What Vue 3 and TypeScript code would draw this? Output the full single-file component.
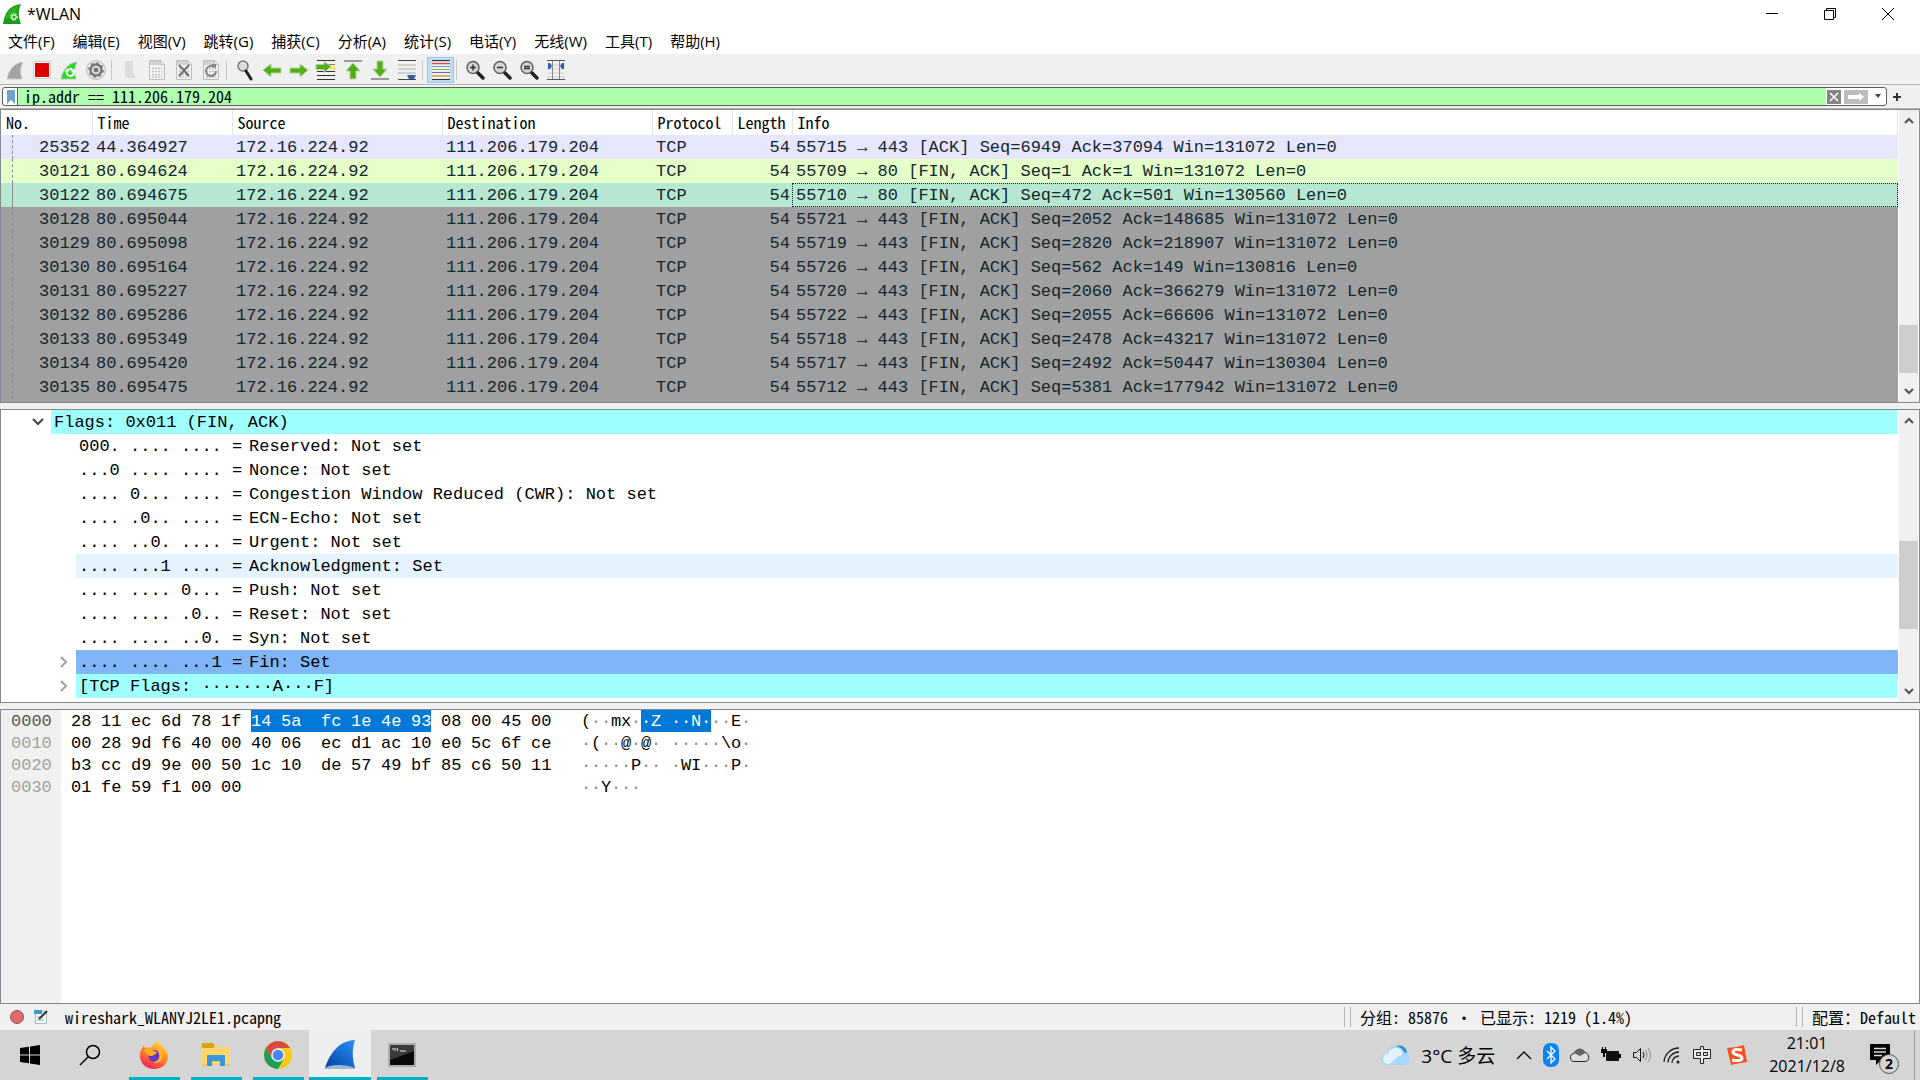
<script setup lang="ts">
interface Packet { no: number; time: string; info: string; kind: string }
interface Detail { bits?: string; text: string; arrow?: string; cls?: string }

const menus = ['文件(F)', '编辑(E)', '视图(V)', '跳转(G)', '捕获(C)', '分析(A)', '统计(S)', '电话(Y)', '无线(W)', '工具(T)', '帮助(H)']

const tools: string[] = [
  'start', 'stop', 'restart', 'options', '|', 'open', 'save', 'close', 'reload', '|',
  'find', 'back', 'forward', 'goto', 'first', 'last', 'autoscroll', '|', 'colorize', '|',
  'zoom-in', 'zoom-out', 'zoom-reset', 'resize',
]

const columns = ['No.', 'Time', 'Source', 'Destination', 'Protocol', 'Length', 'Info']

const packets: Packet[] = [
  { no: 25352, time: '44.364927', info: '55715 → 443 [ACK] Seq=6949 Ack=37094 Win=131072 Len=0', kind: 'tcp' },
  { no: 30121, time: '80.694624', info: '55709 → 80 [FIN, ACK] Seq=1 Ack=1 Win=131072 Len=0', kind: 'http' },
  { no: 30122, time: '80.694675', info: '55710 → 80 [FIN, ACK] Seq=472 Ack=501 Win=130560 Len=0', kind: 'selected' },
  { no: 30128, time: '80.695044', info: '55721 → 443 [FIN, ACK] Seq=2052 Ack=148685 Win=131072 Len=0', kind: 'fin' },
  { no: 30129, time: '80.695098', info: '55719 → 443 [FIN, ACK] Seq=2820 Ack=218907 Win=131072 Len=0', kind: 'fin' },
  { no: 30130, time: '80.695164', info: '55726 → 443 [FIN, ACK] Seq=562 Ack=149 Win=130816 Len=0', kind: 'fin' },
  { no: 30131, time: '80.695227', info: '55720 → 443 [FIN, ACK] Seq=2060 Ack=366279 Win=131072 Len=0', kind: 'fin' },
  { no: 30132, time: '80.695286', info: '55722 → 443 [FIN, ACK] Seq=2055 Ack=66606 Win=131072 Len=0', kind: 'fin' },
  { no: 30133, time: '80.695349', info: '55718 → 443 [FIN, ACK] Seq=2478 Ack=43217 Win=131072 Len=0', kind: 'fin' },
  { no: 30134, time: '80.695420', info: '55717 → 443 [FIN, ACK] Seq=2492 Ack=50447 Win=130304 Len=0', kind: 'fin' },
  { no: 30135, time: '80.695475', info: '55712 → 443 [FIN, ACK] Seq=5381 Ack=177942 Win=131072 Len=0', kind: 'fin' },
]

const details: Detail[] = [
  { text: 'Flags: 0x011 (FIN, ACK)', arrow: 'open', cls: 'parent cyan' },
  { bits: '000. .... .... = ', text: 'Reserved: Not set' },
  { bits: '...0 .... .... = ', text: 'Nonce: Not set' },
  { bits: '.... 0... .... = ', text: 'Congestion Window Reduced (CWR): Not set' },
  { bits: '.... .0.. .... = ', text: 'ECN-Echo: Not set' },
  { bits: '.... ..0. .... = ', text: 'Urgent: Not set' },
  { bits: '.... ...1 .... = ', text: 'Acknowledgment: Set', cls: 'hover' },
  { bits: '.... .... 0... = ', text: 'Push: Not set' },
  { bits: '.... .... .0.. = ', text: 'Reset: Not set' },
  { bits: '.... .... ..0. = ', text: 'Syn: Not set' },
  { bits: '.... .... ...1 = ', text: 'Fin: Set', arrow: 'closed', cls: 'picked' },
  { text: '[TCP Flags: ·······A···F]', arrow: 'closed', cls: 'cyan' },
]

const dump = [
  '28 11 ec 6d 78 1f 14 5a fc 1e 4e 93 08 00 45 00',
  '00 28 9d f6 40 00 40 06 ec d1 ac 10 e0 5c 6f ce',
  'b3 cc d9 9e 00 50 1c 10 de 57 49 bf 85 c6 50 11',
  '01 fe 59 f1 00 00',
].map((line, row) => ({
  offset: (row * 16).toString(16).padStart(4, '0'),
  bytes: line.split(' ').map((hex, i) => {
    const code = parseInt(hex, 16)
    return {
      hex,
      char: code > 32 && code < 127 ? String.fromCharCode(code) : '·',
      plain: code <= 32 || code >= 127,
      on: row === 0 && i >= 6 && i < 12,
      last: i === 11,
      mid: i === 7,
    }
  }),
}))
</script>

<template>
  <div class="window">
    <header class="title">
      <svg class="app-icon" width="20" height="22" viewBox="0 0 20 22">
        <path d="M1 21C2 10 8 2 19 1c-3 6-3 13 0 20z" fill="#1c9a17" />
        <path d="M3 16C5 9 10 4 16 3c-2 5-2 8-1 10z" fill="#39c52c" opacity=".6" />
        <circle cx="12" cy="14" r="3" fill="none" stroke="#e8ffe6" stroke-width="1.500" stroke-dasharray="1.500 1" />
        <circle cx="12" cy="14" r="2" fill="none" stroke="#e8ffe6" />
      </svg>
      <h1>*WLAN</h1>
      <div class="controls">
        <button aria-label="最小化"><svg width="14" height="14"><path d="M1 6.500h12" stroke="#000" /></svg></button>
        <button aria-label="还原"><svg width="14" height="14" fill="none" stroke="#000"><path d="M1.500 3.500h9v9h-9zM3.500 3V1.500h9v9H11" /></svg></button>
        <button aria-label="关闭"><svg width="14" height="14"><path d="M1 1l12 12M13 1L1 13" stroke="#000" /></svg></button>
      </div>
    </header>

    <nav class="menu">
      <button v-for="m in menus" :key="m">{{ m }}</button>
    </nav>

    <div class="toolbar">
      <template v-for="(t, i) in tools" :key="i">
        <span v-if="t === '|'" class="sep"></span>
        <button v-else :class="{ active: t === 'colorize' }" :aria-label="t">
          <svg width="22" height="22" viewBox="0 0 22 22">
            <path v-if="t === 'start'" d="M3 20C5 11 10 4 19 3c-3 6-3 11-1 17z" fill="#a3a3a3" stroke="#c9c9c9" />
            <g v-else-if="t === 'stop'"><path d="M2.500 2.500h17v17h-17z" fill="#f8f8f8" stroke="#cfcfcf" /><path d="M4 4h14v14H4z" fill="#dc0000" /></g>
            <g v-else-if="t === 'restart'">
              <path d="M3 20C5 11 10 4 19 3c-3 6-3 11-1 17z" fill="#1ee01e" stroke="#bdbdbd" />
              <path d="M9 11c-1 3 0 6 3 6 3 0 4-2 4-4M15 14c0-3-2-5-4-4" fill="none" stroke="#fff" stroke-width="2" />
              <path d="M7 13l2-4 3 3zM13 13h5l-2-3z" fill="#fff" />
            </g>
            <g v-else-if="t === 'options'" fill="none">
              <circle cx="11" cy="11" r="9.500" fill="#e6e6e6" stroke="#bcbcbc" /><circle cx="11" cy="11" r="5.500" stroke="#777" stroke-width="2.500" /><circle cx="11" cy="11" r="7" stroke="#777" stroke-width="1.500" stroke-dasharray="2.500 3" /><circle cx="11" cy="11" r="2.500" fill="#777" />
            </g>
            <path v-else-if="t === 'open'" d="M6 2h8v13h2v4H9l-3-1z" fill="#dcdcdc" />
            <g v-else-if="t === 'save' || t === 'close' || t === 'reload'">
              <path d="M3.500 1.500h11l4 4v15h-15z" fill="#f2f2f2" stroke="#bdbdbd" /><path d="M4 2h10v4H4z" fill="#d2d2d2" /><path d="M14.500 1.500v4h4" fill="none" stroke="#bdbdbd" />
              <path d="M6 9.500h10M6 12.500h10M6 15.500h10M6 18h10" stroke="#c2c2c2" stroke-width="1.500" stroke-dasharray="2 1" />
              <path v-if="t === 'close'" d="M6 6l10 11M16 6L6 17" stroke="#707070" stroke-width="2" />
              <g v-if="t === 'reload'"><path d="M14 8a5 5 0 1 0 2 4" fill="none" stroke="#858585" stroke-width="2" /><path d="M11 5h5v5z" fill="#858585" /></g>
            </g>
            <g v-else-if="t === 'find'"><circle cx="9" cy="7" r="5" fill="#d9dde0" stroke="#777" stroke-width="1.500" /><path d="M12 12l5 8" stroke="#222" stroke-width="3" stroke-linecap="round" /></g>
            <path v-else-if="t === 'back'" d="M2 11l8-6v4h10v5H10v4z" fill="#4eb012" stroke="#b5cfa5" />
            <path v-else-if="t === 'forward'" d="M20 11l-8-6v4H2v5h10v4z" fill="#4eb012" stroke="#b5cfa5" />
            <g v-else-if="t === 'goto'"><path d="M2 1.500h18M2 12.500h18M2 16.500h18M2 20.500h18" stroke="#333" /><path d="M12 5.500h8" stroke="#777" /><path d="M14 9h6" stroke="#ffe13a" stroke-width="3" /><path d="M16 7.500l-7-5v3H1v5h8v3z" fill="#4eb012" stroke="#b5cfa5" /></g>
            <g v-else-if="t === 'first'"><path d="M2 2h18" stroke="#9b9b9b" stroke-width="2" /><path d="M11 4l7 8h-4v8H8v-8H4z" fill="#4eb012" stroke="#b5cfa5" /></g>
            <g v-else-if="t === 'last'"><path d="M2 20h18" stroke="#9b9b9b" stroke-width="2" /><path d="M11 18l7-8h-4V2H8v8H4z" fill="#4eb012" stroke="#b5cfa5" /></g>
            <g v-else-if="t === 'autoscroll'"><path d="M2 1.500h18M2 20.500h18" stroke="#444" /><path d="M2 6h18M2 10h18M2 14h18" stroke="#cfd1c9" stroke-width="2" /><path d="M11 16h9l-2 4h-5z" fill="#2d5fa8" /></g>
            <g v-else-if="t === 'colorize'"><path d="M2 1.500h18M2 20.500h18" stroke="#333" /><path d="M2 3h18v17H2z" fill="#eef0ee" /><path d="M2 4.500h18" stroke="#e64646" stroke-width="1.500" /><path d="M2 7.500h18" stroke="#6595dd" /><path d="M2 10.500h18" stroke="#72bf43" /><path d="M2 13.500h18" stroke="#7b62af" /><path d="M2 17h18" stroke="#caa642" stroke-width="1.500" /></g>
            <g v-else-if="t.startsWith('zoom')"><circle cx="9" cy="8.500" r="6" fill="#d5d5d5" stroke="#606060" stroke-width="1.500" /><path d="M14 14l5 5" stroke="#222" stroke-width="3.500" stroke-linecap="round" /><path v-if="t === 'zoom-reset'" d="M6 7.500h6M6 9.500h6" stroke="#333" stroke-width="1.500" /><path v-else d="M6 8.500h6" stroke="#333" stroke-width="1.500" /><path v-if="t === 'zoom-in'" d="M9 5.500v6" stroke="#333" stroke-width="1.500" /></g>
            <g v-else><path d="M2 1.500h18M2 20.500h18" stroke="#555" /><path d="M2 6h18M2 10h18M2 14h18M2 18h18" stroke="#d2d4cc" /><path d="M7.500 2v18M14.500 2v18" stroke="#888" /><path d="M3 4h2l2 3-2 3H3zM19 4h-2l-2 3 2 3h2z" fill="#2d65ac" /></g>
          </svg>
        </button>
      </template>
    </div>

    <form class="filter" @submit.prevent>
      <div class="box">
        <button class="mark" type="button" aria-label="书签"><svg width="14" height="16" viewBox="0 0 14 16"><path d="M4 1h8v14l-4-4-4 4z" fill="#729fcf" /></svg></button>
        <input aria-label="显示过滤器" value="ip.addr == 111.206.179.204" spellcheck="false" />
        <button class="clear" type="button" aria-label="清除"><svg width="14" height="14"><path d="M0 0h14v14H0z" fill="#858585" /><path d="M3 3l8 8M11 3l-8 8" stroke="#fff" stroke-width="1.500" /></svg></button>
        <button class="apply" type="submit" aria-label="应用"><svg width="24" height="14"><rect width="24" height="14" rx="1" fill="#bcbcbc" /><path d="M4 5h11V3l5 4-5 4V9H4z" fill="#fff" /></svg></button>
        <button class="drop" type="button" aria-label="历史"><svg width="8" height="5"><path d="M1 0h6L4 4z" fill="#444" /></svg></button>
      </div>
      <button class="plus" type="button" aria-label="添加"><svg width="10" height="10"><path d="M5 1v8M1 5h8" stroke="#333" stroke-width="2" /></svg></button>
    </form>

    <main>
      <section class="pane list">
        <div class="body">
          <table>
            <colgroup><col class="c-no" /><col class="c-time" /><col class="c-addr" /><col class="c-addr" /><col class="c-proto" /><col class="c-len" /><col /></colgroup>
            <thead><tr><th v-for="c in columns" :key="c">{{ c }}</th></tr></thead>
            <tbody>
              <tr v-for="p in packets" :key="p.no" :class="p.kind">
                <td class="num">{{ p.no }}</td><td>{{ p.time }}</td><td>172.16.224.92</td><td>111.206.179.204</td><td>TCP</td><td class="num">54</td><td class="info">{{ p.info }}</td>
              </tr>
            </tbody>
          </table>
        </div>
        <div class="scroll">
          <svg width="10" height="8"><path d="M1 6l4-4 4 4" /></svg>
          <div class="track"><i class="before-a"></i><i class="thumb thumb-a"></i></div>
          <svg width="10" height="8"><path d="M1 2l4 4 4-4" /></svg>
        </div>
      </section>

      <section class="pane tree">
        <ul class="body">
          <li v-for="d in details" :key="d.bits ?? d.text" :class="d.cls">
            <span class="arrow">
              <svg v-if="d.arrow === 'open'" width="12" height="12"><path d="M1 3l5 5 5-5" fill="none" stroke="#444" stroke-width="2" /></svg>
              <svg v-if="d.arrow === 'closed'" width="12" height="12"><path d="M4 1l5 5-5 5" fill="none" stroke="#a0a0a0" stroke-width="2" /></svg>
            </span>
            <span class="line"><span v-if="d.bits" class="bits">{{ d.bits }}</span><span>{{ d.text }}</span></span>
          </li>
        </ul>
        <div class="scroll">
          <svg width="10" height="8"><path d="M1 6l4-4 4 4" /></svg>
          <div class="track"><i class="before-b"></i><i class="thumb thumb-b"></i></div>
          <svg width="10" height="8"><path d="M1 2l4 4 4-4" /></svg>
        </div>
      </section>

      <section class="pane hex">
        <div class="offsets"><div v-for="(r, i) in dump" :key="r.offset" class="row" :class="{ current: i === 0 }">{{ r.offset }}</div></div>
        <div class="bytes">
          <div v-for="r in dump" :key="r.offset" class="row"><span v-for="(b, i) in r.bytes" :key="i" class="byte" :class="{ on: b.on, last: b.last, mid: b.mid }">{{ b.hex }}</span></div>
        </div>
        <div class="ascii">
          <div v-for="r in dump" :key="r.offset" class="row"><span v-for="(b, i) in r.bytes" :key="i" class="char" :class="{ dot: b.plain, on: b.on, mid: b.mid }">{{ b.char }}</span></div>
        </div>
      </section>
    </main>

    <footer class="status">
      <svg width="16" height="16"><circle cx="8" cy="8" r="6.500" fill="#e26a6a" stroke="#8e5252" /></svg>
      <svg class="note" width="16" height="16"><path d="M2.500 2.500h11v12h-11z" fill="#f3f7f5" stroke="#a9bcc0" /><path d="M1 1h8v4H1z" fill="#3b9bc7" /><path d="M4 8h6M4 11h7" stroke="#9ab" /><path d="M6 10l8-8" stroke="#333" stroke-width="2" /></svg>
      <span class="file">wireshark_WLANYJ2LE1.pcapng</span>
      <span class="counts">分组: 85876 · 已显示: 1219 (1.4%)</span>
      <span class="profile">配置：Default</span>
    </footer>

    <div class="taskbar">
      <button class="small" aria-label="开始"><svg width="20" height="20"><path d="M0 3l9-1.300V9.500H0zM10 1.600L20 0v9.500H10zM0 10.500h9v7.800L0 17zM10 10.500h10V20l-10-1.500z" /></svg></button>
      <button class="small" aria-label="搜索"><svg width="22" height="22" fill="none" stroke="#000" stroke-width="1.500"><circle cx="14" cy="8" r="6.500" /><path d="M9.500 12.500L1 21" /></svg></button>
      <button class="app" aria-label="Firefox">
        <svg width="30" height="30" viewBox="0 0 30 30">
          <defs><linearGradient id="fx" x1=".8" y1="0" x2=".3" y2="1"><stop offset="0" stop-color="#ffe14d" /><stop offset=".45" stop-color="#ff9020" /><stop offset="1" stop-color="#f5205c" /></linearGradient></defs>
          <path d="M19 1c2 3 4 4 6 7 2 2 4 5 4 9 0 7-6 12-14 12S1 23 1 16c0-4 1-8 4-11l1 3c2-1 4-1 6 0 1-3 4-6 7-7z" fill="url(#fx)" />
          <circle cx="15.500" cy="16" r="6" fill="#6b35c5" /><path d="M5 10c3-2 7-2 10 1l3 1c-1 3-4 3-5 4-3 0-7-2-8-6z" fill="#ffab25" /><path d="M18 9c4 0 7 4 5 9-1 4-6 6-9 4 5 0 9-5 4-13z" fill="#ffb52e" />
        </svg>
      </button>
      <button class="app" aria-label="文件资源管理器">
        <svg width="28" height="26"><path d="M0 2h12l3 3h13v18H0z" fill="#ffd768" /><path d="M0 1h11l2 3-2 2H0z" fill="#dca11d" /><path d="M5 13h18v11h-5v-5h-8v5H5z" fill="#3c98dc" /><path d="M0 23h5M23 23h5" stroke="#eab63a" /></svg>
      </button>
      <button class="app" aria-label="Chrome">
        <svg width="28" height="28" viewBox="0 0 28 28"><circle cx="14" cy="14" r="14" fill="#fbc916" /><path d="M14 7h12.100A14 14 0 0 0 1.900 7L8 17.500z" fill="#d84b40" /><path d="M1.900 7A14 14 0 0 0 14 28l6-10.500-6 3-6-3z" fill="#1c9f58" /><circle cx="14" cy="14" r="6.800" fill="#f4f4f4" /><circle cx="14" cy="14" r="5.300" fill="#4a86f0" /></svg>
      </button>
      <button class="app current" aria-label="Wireshark">
        <svg width="30" height="30" viewBox="0 0 30 30"><defs><linearGradient id="fin" x1="1" y1="0" x2=".2" y2="1"><stop offset="0" stop-color="#2b92fb" /><stop offset="1" stop-color="#0647a8" /></linearGradient></defs><path d="M0 28C5 14 13 1 30 0c-3 9-3 18 0 28z" fill="url(#fin)" /><path d="M0 28c6-4 20-4 30 0v1H0z" fill="#9db8d4" /></svg>
      </button>
      <button class="app" aria-label="命令提示符">
        <svg width="28" height="24"><path d="M1 1h26v22H1z" fill="#0a0a0a" stroke="#a8adb0" stroke-width="2" /><path d="M2 2h24v6L2 17z" fill="#3a3a3a" /><path d="M4 6h2M7 5v3M9 5l1 3M12 8h6" stroke="#e5e5e5" /></svg>
      </button>

      <div class="tray">
        <svg width="28" height="22" viewBox="0 0 28 22"><path d="M6 21a6 6 0 0 1-1-12c1-5 5-8 10-8 5-1 9 3 9 7 6 3 4 13-2 13z" fill="#a5d8fb" /><path d="M14 2c5-2 11 1 11 7l-3-1c-1-3-4-5-8-6z" fill="#2f8ed8" /><path d="M6 20a5 5 0 0 1 0-10c1-4 4-6 8-6 4 0 7 3 6 7-6 1-10 9-14 9z" fill="#e2f3fe" /></svg>
        <span class="weather">3°C 多云</span>
        <svg width="16" height="10"><path d="M1 9l7-7 7 7" fill="none" stroke="#111" stroke-width="1.500" /></svg>
        <svg width="16" height="24"><rect width="16" height="24" rx="7" fill="#0a84f5" /><path d="M4 8l8 8-4 4V4l4 4-8 8" fill="none" stroke="#fff" stroke-width="1.300" /></svg>
        <svg width="20" height="16"><path d="M5 14.500a4 4 0 0 1-1-8c2-5 8-6 11-1 5 1 5 9 0 9z" fill="#dedede" stroke="#222" /><path d="M4 6c3-6 9-5 11 0l-5 3z" fill="#666" /></svg>
        <svg width="20" height="16"><path d="M5.500 4.500h12v9h-12z" stroke="#111" fill="#111" /><path d="M18 7h2v4h-2zM0 2h6v4H4v4H2V6H0zM1 0h1v2H1zM4 0h1v2H4z" /></svg>
        <svg width="20" height="18" fill="none" stroke="#111"><path d="M1.500 6.500h3l4-4v13l-4-4h-3z" /><path d="M11 6q2 3 0 6" /><path d="M13 4q4 5 0 10M16 2q5 7 0 14" stroke="#888" /></svg>
        <svg width="18" height="18" fill="none" stroke="#222" stroke-width="1.300"><path d="M1 16A15 15 0 0 1 16 2M5 16.500A11 11 0 0 1 16 6M9 17a7 7 0 0 1 7-7" /><circle cx="15" cy="16" r="1.500" fill="#222" stroke="none" /></svg>
        <svg width="20" height="20" fill="#eee" stroke="#222"><path d="M8.500 1.500h3v3h7v9h-7v5h-3v-5h-7v-9h7zM4.500 7.500v3h4v-3zM11.500 7.500v3h4v-3z" fill-rule="evenodd" /></svg>
        <svg class="sogou" width="20" height="22"><path d="M0 4q8 0 17-3l3 17q-8 1-16 3z" fill="#f4511e" /><path d="M15 6c-4-1-9-1-9 2 0 4 9 2 9 6 0 3-5 3-10 2" fill="none" stroke="#fff" stroke-width="3" /></svg>
        <time class="clock"><span>21:01</span><span>2021/12/8</span></time>
        <button class="notice" aria-label="通知"><svg width="20" height="22"><path d="M0 0h20v16h-9l-5 5v-5H0z" /><path d="M4 4.500h12M4 8h12M4 11.500h8" stroke="#ddd" stroke-width="1.500" /></svg><b>2</b></button>
      </div>
    </div>
  </div>
</template>

<style>
body { margin: 0; }
</style>

<style scoped>
* { box-sizing: border-box; }
button { padding: 0; border: 0; background: none; color: inherit; font: inherit; display: flex; align-items: center; justify-content: center; }
svg { display: block; flex: none; }
.window {
  --mono: "Liberation Mono", "DejaVu Sans Mono", monospace;
  --song: "Noto Sans Mono CJK SC", "Liberation Mono", monospace;
  --ui: "Open Sans", "Noto Sans CJK SC", sans-serif;
  display: flex; flex-direction: column; min-height: 100vh; background: #f0f0f0; color: #000; font-family: var(--ui);
}
.title { display: flex; align-items: center; height: 28px; padding: 0 3px 0 2px; background: #fff; }
h1 { margin: 0 0 0 5px; font-size: 16px; font-weight: 400; line-height: 28px; }
.controls { display: flex; margin-left: auto; }
.controls button { width: 58px; height: 28px; }
.menu { display: flex; gap: 18px; height: 27px; padding-left: 8px; background: #fff; border-bottom: 1px solid #f0f0f0; font-size: 15px; line-height: 28px; }
.toolbar { display: flex; align-items: center; height: 30px; padding-left: 1px; border-bottom: 1px solid #b4b4b4; }
.toolbar button { width: 27px; height: 26px; }
.toolbar .active { background: #c0dcf3; border: 1px solid #90c8f6; }
.sep { width: 7px; height: 20px; border-left: 1px solid #c8c8c8; margin-left: 2px; margin-right: -2px; }
.filter { display: flex; align-items: center; height: 24px; padding: 1px 17px 1px 2px; border-bottom: 1px solid #b4b4b4; }
.box { display: flex; flex: 1; align-items: center; height: 19px; border: 1px solid #606060; border-radius: 3px; background: #fff; overflow: hidden; }
.mark { width: 15px; height: 17px; border-right: 1px solid #606060; }
.box input { flex: 1; min-width: 0; height: 17px; padding: 0 0 0 6px; border: 0; outline: 0; background: #afffaf; font: 16px/17px var(--song); }
.clear { margin-left: 1px; }
.apply { margin-left: 3px; }
.drop { width: 16px; margin-left: 2px; }
.plus { width: 12px; margin-left: 4px; }
main { display: flex; flex: 1; flex-direction: column; gap: 6px; }
.pane { display: flex; border: 1px solid #828790; background: #fff; font: 17px/24px var(--mono); }
.body { flex: 1; min-width: 0; margin: 0; padding: 0; list-style: none; }
.list { height: 294px; }
.list .body { background: linear-gradient(#fff 200px, #a0a0a0 200px); }
table { width: 100%; table-layout: fixed; border-collapse: collapse; color: #12272e; }
th { height: 25px; padding: 0 0 1px 5px; border-right: 1px solid #e5e5e5; background: #fff; color: #000; font: 16px/22px var(--song); text-align: left; }
td { height: 24px; padding: 2px 2px 0 4px; overflow: hidden; line-height: 22px; white-space: pre; }
.c-no { width: 91px; } .c-time { width: 140px; } .c-addr { width: 210px; } .c-proto { width: 80px; } .c-len { width: 60px; }
.num { text-align: right; }
td:first-child { position: relative; }
td:first-child::before { content: ""; position: absolute; left: 11px; top: 0; bottom: 0; border-left: 1px dashed #858a94; }
.selected td:first-child::before { border-left-style: solid; }
.tcp { background: #e7e6ff; } .http { background: #e4ffc7; } .selected { background: #b6e8d1; } .fin { background: #a0a0a0; }
.selected .info { outline: 1px dotted #12272e; outline-offset: -1px; }
.scroll { display: flex; flex-direction: column; align-items: center; width: 20px; margin-left: 1px; border-right: 1px solid #fff; background: #f0f0f0; padding: 7px 0; }
.scroll svg { fill: none; stroke: #555; stroke-width: 2; }
.track { display: flex; flex: 1; flex-direction: column; align-self: stretch; }
.thumb { background: #cdcdcd; }
.before-a { flex: 199; } .thumb-a { flex: 48; margin-bottom: 14px; }
.before-b { flex: 115; } .thumb-b { flex: 88; margin-bottom: 58px; }
.tree { height: 294px; }
li { display: flex; }
.arrow { display: flex; align-items: center; justify-content: flex-end; width: 75px; height: 24px; padding-right: 7px; }
.parent .arrow { width: 50px; }
.line { display: flex; flex: 1; padding: 2px 0 0 3px; line-height: 22px; white-space: pre; }
.bits { width: 170px; }
.cyan .line { background: #a0ffff; } .hover .line { background: #e5f3ff; } .picked .line { background: #80b5f7; }
.hex { flex: 1; }
.row { display: flex; height: 22px; }
.offsets { width: 60px; padding-left: 10px; background: #f0f0f0; color: #a0a0a0; }
.offsets .current { color: #555; }
.bytes { width: 510px; padding-left: 10px; }
.byte { width: 30px; }
.byte.mid { width: 40px; }
.byte.on { background: #0078d7; color: #fff; }
.byte.on.last { width: 20px; margin-right: 10px; }
.ascii { padding-left: 10px; }
.char { width: 10px; }
.char.dot { color: #888; }
.char.on { background: #0078d7; color: #fff; }
.char.mid { width: 20px; }
.status { display: flex; align-items: center; height: 26px; padding: 0 4px 0 9px; font: 16px/26px var(--song); white-space: pre; }
.note { margin-left: 8px; }
.file { margin-left: 16px; }
.counts, .profile { position: relative; padding-left: 16px; }
.counts { width: 452px; margin-left: auto; }
.counts::before, .profile::before { content: ""; position: absolute; left: 0; top: 3px; width: 5px; height: 20px; border: solid #b4b4b4; border-width: 0 1px; }
.taskbar { display: flex; height: 50px; background: #d5d5d5; }
.small { width: 60px; }
.app { width: 62px; position: relative; }
.small + .app { margin-left: 3px; }
.app::after { content: ""; position: absolute; left: 6px; right: 5px; bottom: 0; height: 3px; background: #00b1c6; }
.current.app { background: #eee; }
.current.app::after { left: 0; right: 0; }
.tray { display: flex; align-items: center; margin-left: auto; margin-right: 5px; padding-right: 24px; gap: 11px; border-right: 1px solid #a0a0a0; }
.weather { font-size: 19px; margin-right: 10px; }
.sogou { margin-left: 4px; }
.clock { display: flex; flex-direction: column; align-items: center; margin-left: 11px; font-size: 16px; line-height: 23px; }
.notice { position: relative; margin-left: 14px; }
.notice b { position: absolute; left: 9px; top: 10px; width: 20px; height: 20px; border: 1px solid #555; border-radius: 50%; background: #d5d5d5; font-size: 14px; line-height: 18px; }
</style>
